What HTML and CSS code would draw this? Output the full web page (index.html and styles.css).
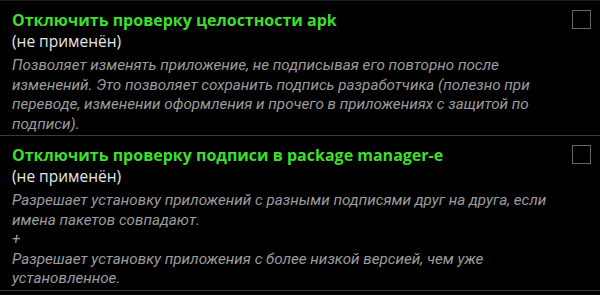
FILE: index.html
```html
<!DOCTYPE html>
<html lang="ru">
<head>
<meta charset="utf-8">
<link rel="stylesheet" href="styles.css">
</head>
<body>
<div class="list">
  <div class="item">
    <div class="text">
      <div class="title">Отключить проверку целостности apk</div>
      <div class="status">(не применён)</div>
      <div class="desc">Позволяет изменять приложение, не подписывая его повторно после изменений. Это позволяет сохранить подпись разработчика (полезно при переводе, изменении оформления и прочего в приложениях с защитой по подписи).</div>
    </div>
    <div class="check"></div>
  </div>
  <div class="item">
    <div class="text">
      <div class="title">Отключить проверку подписи в package manager-е</div>
      <div class="status">(не применён)</div>
      <div class="desc">Разрешает установку приложений с разными подписями друг на друга, если имена пакетов совпадают.<br>+<br>Разрешает установку приложения с более низкой версией, чем уже установленное.</div>
    </div>
    <div class="check"></div>
  </div>
</div>
</body>
</html>
```
FILE: styles.css
```css
html, body {
  margin: 0;
  padding: 0;
  background: #000;
}
.list {
  width: 600px;
  border-top: 1px solid #1e1e1e;
}
.item {
  display: flex;
  align-items: flex-start;
  padding: 9px 9px 1px 12px;
  border-bottom: 1px solid #3a3a3a;
}
.text {
  flex: none;
  width: 552px;
}
.title {
  font-family: "Open Sans", sans-serif;
  font-weight: 700;
  font-size: 16px;
  line-height: 20px;
  color: #3ddf2a;
}
.status {
  font-family: "Open Sans", sans-serif;
  font-size: 15.5px;
  line-height: 22px;
  color: #e6e6e6;
  margin-bottom: 4px;
}
.desc {
  font-family: Roboto, sans-serif;
  font-style: italic;
  font-size: 15.2px;
  line-height: 19.5px;
  color: #9c9c9c;
}
.check {
  margin-left: auto;
  width: 17px;
  height: 17px;
  border: 1px solid #666;
}
```
